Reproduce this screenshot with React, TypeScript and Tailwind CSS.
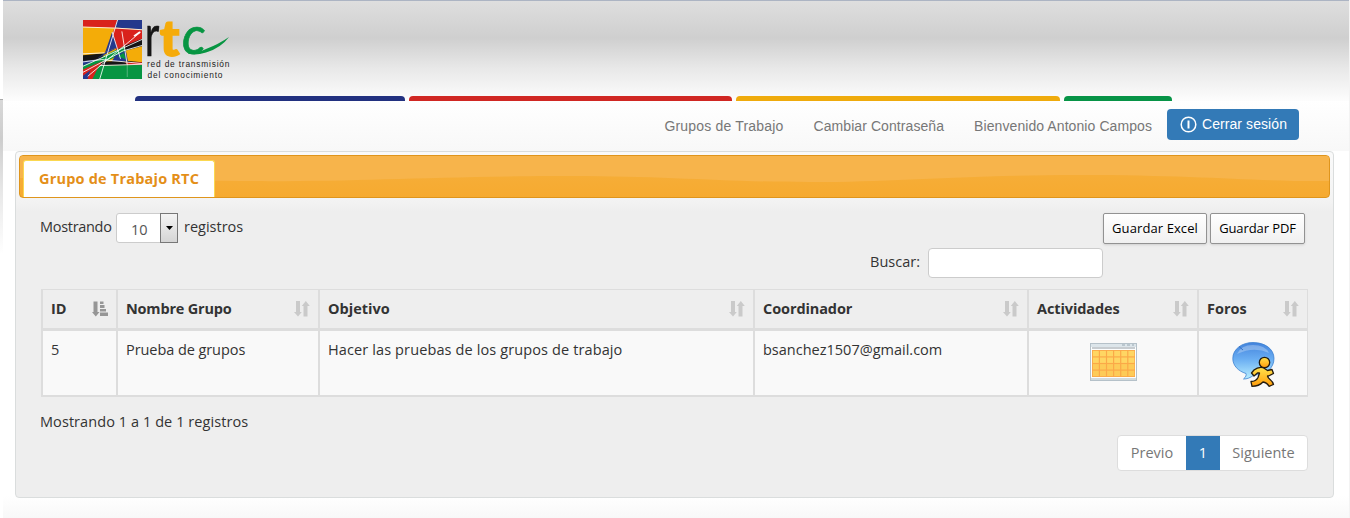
import type { ReactNode } from "react";

function Logo() {
  return (
    <svg width="150" height="64" viewBox="80 18 150 64" className="overflow-visible" role="img" aria-label="rtc">
      <svg x="83" y="20" width="59" height="59" viewBox="0 0 176 176" preserveAspectRatio="none">
        <rect width="176" height="176" fill="#f4ac08" />
        <path d="M0 0H103L95 24L0 20Z" fill="#d9221c" />
        <path d="M103 0H176V28L94 22Z" fill="#24388c" />
        <path d="M94 24L176 30V60L122 84L100 92L84 48Z" fill="#d9221c" />
        <path d="M87 36L102 82L66 96Z" fill="#24388c" />
        <path d="M126 76L176 56V78L118 94Z" fill="#151515" />
        <path d="M0 105L64 99L56 116L0 123Z" fill="#151515" />
        <path d="M56 110L122 78L128 94L60 128Z" fill="#079542" />
        <path d="M70 94L104 82L40 116Z" fill="#24388c" />
        <path d="M0 122L52 116L28 134L0 146Z" fill="#24388c" />
        <path d="M0 136L70 108L62 122L0 154Z" fill="#079542" />
        <path d="M62 124L136 122L176 126V136H40Z" fill="#151515" />
        <path d="M96 106L128 92L134 122L86 124Z" fill="#24388c" />
        <path d="M104 108L122 98L128 118Z" fill="#079542" />
        <path d="M124 126H176V134L136 136Z" fill="#d9221c" />
        <path d="M0 148L56 124L40 176H0Z" fill="#d9221c" />
        <path d="M0 166L22 150L14 176H0Z" fill="#24388c" />
        <path d="M48 136L176 134V176H28Z" fill="#079542" />
        <g stroke="#fff" strokeWidth="2.500" fill="none">
          <path d="M0 21L94 24L176 29M103 0L50 176M0 138L176 58M0 156L120 92L176 76M14 168L172 36M0 101L64 98M0 125L56 118L176 130M87 36L112 116M116 34L132 134M50 136L176 132" />
          <path d="M152 48L170 36" strokeWidth="5" />
          <path d="M132 134V170" strokeWidth="1.500" opacity=".6" />
        </g>
      </svg>
      <text transform="translate(144.8 55.500) scale(.68 1)" fontFamily="Lato, sans-serif" fontSize="59" fill="#171717" stroke="#171717" strokeWidth=".5">r</text>
      <text transform="translate(160 55.500) scale(1.02 1)" fontFamily="Lato, sans-serif" fontWeight="900" fontSize="50" fill="#f5ab0a" stroke="#f5ab0a" strokeWidth="1.800">t</text>
      <text transform="translate(182 54) scale(.98 1)" fontFamily="Lato, sans-serif" fontStyle="italic" fontSize="53" fill="#079542" stroke="#079542" strokeWidth=".7">c</text>
      <path d="M189 52Q196 54 206 49Q219 44 229 37Q221 48 206 52.500Q195 56 188 53.500Z" fill="#079542" />
      <text x="147" y="67.300" fontFamily="'Liberation Sans', sans-serif" fontSize="8.400" textLength="82.500" fill="#222">red de transmisión</text>
      <text x="147.500" y="77.600" fontFamily="'Liberation Sans', sans-serif" fontSize="8.400" textLength="75" fill="#222">del conocimiento</text>
    </svg>
  );
}

function SortIcon({ active }: { active?: boolean }) {
  return active ? (
    <svg width="16" height="16" viewBox="0 0 16 16" fill="#969696" className="shrink-0">
      <path d="M1.500 0.500H5.500V11H7.500L3.800 15.500L0 11H1.500Z" />
      <path d="M8 0.500h3.500v2.500H8zM8 4h4.500v3H8zM8 8h6v2.500H8zM8 11.500h8v3.500H8z" />
    </svg>
  ) : (
    <svg width="16" height="16" viewBox="0 0 16 16" fill="#cacaca" className="shrink-0">
      <path d="M2 0H6V11H7.800L4 15.500L0 11H2Z" />
      <path d="M9.500 15.500h4V5h2.300L11.800 0L7.800 5h1.700Z" />
    </svg>
  );
}

function CalendarIcon() {
  return (
    <svg width="47" height="38" viewBox="0 0 47 38">
      <rect x=".5" y=".5" width="46" height="37" fill="#fcfdfd" stroke="#b5c1c9" />
      <rect x="1" y="1" width="45" height="3" fill="#dce5ea" />
      <path d="M32 2h3M37 2h3M42 2h2" stroke="#98a8b2" />
      <rect x="2" y="4" width="43" height="2" fill="#c7ccd0" />
      <rect x="2" y="7" width="43" height="27" fill="#fba948" />
      {[0, 1, 2, 3].map((r) =>
        [0, 1, 2, 3, 4, 5].map((c) => (
          <rect key={`${r}-${c}`} x={2.900 + c * 7.1} y={7.900 + r * 6.6} width="5.900" height="5.400" fill={r < 2 ? "#ffd663" : "#fdcb58"} />
        )),
      )}
      <rect x="1" y="35" width="45" height="2" fill="#d2dadd" />
    </svg>
  );
}

function ForumIcon() {
  return (
    <svg width="44" height="46" viewBox="0 0 44 46">
      <defs>
        <linearGradient id="bubble" x1="0" y1="0" x2="0" y2="1">
          <stop offset="0" stopColor="#4383dc" />
          <stop offset=".45" stopColor="#69adf2" />
          <stop offset="1" stopColor="#b9efff" />
        </linearGradient>
        <linearGradient id="runner" x1="0" y1="0" x2="0" y2="1">
          <stop offset="0" stopColor="#ffe34d" />
          <stop offset="1" stopColor="#ff9c0b" />
        </linearGradient>
      </defs>
      <path d="M21 1.500C33 1.500 42 8 42 17.500S34 34 22 34C18 37 15 38 11.500 38C14 36 14.500 34 14 32.500C6 30 .8 24.500 .8 17.500C.8 8 10 1.500 21 1.500Z" fill="url(#bubble)" stroke="#3c80d0" strokeWidth=".8" />
      <path d="M5 13Q9 4 21 4T37 12Q22 5 5 13Z" fill="#fff" opacity=".28" />
      <path d="M7 5.500L11 9" stroke="#356fc4" />
      <g fill="url(#runner)" stroke="#231b10" strokeWidth="1.300" strokeLinejoin="round">
        <path d="M22 29Q26 25.500 31 26.500L35.500 29.500L40 28.500L41.500 32.500L36.500 35L35.500 35Q36 37 38 38.500Q41 41 41.500 43.500L37 45.300Q35 41.500 31 41Q27 45.300 20 45.300L19 40.500Q24 40.500 26 36.500L27.500 32L25.500 32L22 35L19.500 32Z" />
        <circle cx="32.500" cy="21.500" r="5.200" />
      </g>
    </svg>
  );
}

function Cell({ children, head }: { children: ReactNode; head?: boolean }) {
  return (
    <div
      className={
        head
          ? "flex items-center justify-between border-l-2 border-[#ddd] pl-2 pr-2 font-bold"
          : "border-l-2 border-[#ddd] bg-[#f9f9f9] pl-2 pt-2"
      }
    >
      {children}
    </div>
  );
}

const grid = "grid grid-cols-[75px_202px_435px_274px_170px_110px] border-r border-[#ddd]";

export default function App() {
  return (
    <div className="flex h-[518px] w-[1350px] overflow-hidden bg-white font-['Open_Sans',sans-serif] text-[14.5px] leading-[22px] text-[#333]">
      <div className="w-[3px] pt-[99px]">
        <div className="h-[155px] border-t border-[#aaa] bg-[linear-gradient(#d8d8d8,#cdcdcd_25%,#e8e8e8_60%,#fff)]" />
      </div>
      <div className="flex w-[1347px] flex-col border-r border-[#f3f3f3]">
        <header className="flex h-[101px] flex-col justify-between border-t border-[#acb4c3] bg-[linear-gradient(#dedede,#cfcfcf_37%,#e8e8e8_67%,#fdfdfd)]">
          <div className="pl-[77px] pt-[17px]"><Logo /></div>
          <div className="flex gap-1 pl-[132px]">
            <i className="h-[5px] w-[270px] rounded-t-[4px] bg-[#223180]" />
            <i className="h-[5px] w-[323px] rounded-t-[4px] bg-[#d02723]" />
            <i className="h-[5px] w-[324px] rounded-t-[4px] bg-[#efab0d]" />
            <i className="h-[5px] w-[108px] rounded-t-[4px] bg-[#079447]" />
          </div>
        </header>
        <nav className="flex h-[50px] items-start justify-end bg-gradient-to-b from-white to-[#f8f8f8] pr-[50px] pt-2 font-['Liberation_Sans',sans-serif] text-[14px] leading-[34px] tracking-[0.08px] text-[#777]">
          <span className="mr-[30px] tracking-[0.18px]">Grupos de Trabajo</span>
          <span className="mr-[30px]">Cambiar Contraseña</span>
          <span className="mr-[15px]">Bienvenido Antonio Campos</span>
          <button className="flex h-[31px] w-[132px] items-center justify-center gap-[5px] rounded-[4px] bg-[#337ab7] pb-px pl-px text-white">
            <svg width="17" height="17" viewBox="0 0 17 17" fill="none" stroke="white">
              <circle cx="8.500" cy="8.500" r="7.300" strokeWidth="1.500" />
              <path d="M8.500 4.500V12.500" strokeWidth="2" />
            </svg>
            <span>Cerrar sesión</span>
          </button>
        </nav>
        <div className="flex flex-1 flex-col bg-[linear-gradient(#fff,#fff_94%,#f8f8f8)] pl-3">
          <main className="h-[347px] w-[1319px] rounded-[4px] border border-[#dadddd] bg-[linear-gradient(#fafafa,#f4f4f4_46px,#eee_60px)] p-[3px]">
            <div className="relative flex h-[43px] w-[1311px] overflow-hidden rounded-[4px] border border-[#df951c] bg-[linear-gradient(#f6b03d,#f6aa30)] pl-[3px] pt-1">
              <svg className="absolute left-0 top-0" width="1311" height="43" viewBox="0 0 1311 43" preserveAspectRatio="none">
                <path d="M0 0H1311V25C1240 26 1180 19 1060 19C940 19 880 26 790 26C700 26 640 19 530 20C400 21 330 26 220 25L0 22Z" fill="#f7b44b" />
              </svg>
              <div className="relative h-[39px] w-[192px] whitespace-nowrap rounded-t-[3px] border border-b-0 border-[#fbd850] bg-white pl-[15px] pt-[7px] text-[14.5px] font-bold tracking-[0.2px] text-[#e48f18]">Grupo de Trabajo RTC</div>
            </div>
            <div className="flex h-[51px] justify-between pl-[21px] pr-[25px] pt-[15px]">
              <div className="flex items-start">
                <span className="mt-[3px] w-[76px] tracking-[-0.3px]">Mostrando</span>
                <div className="flex h-[30px] w-[62px] justify-between rounded-[3px] border border-[#ccc] bg-white text-[#555]">
                  <span className="pl-[14px] pt-[5px]">10</span>
                  <span className="-my-px -mr-px flex w-[18px] items-center justify-center border border-[#777] bg-gradient-to-b from-[#f4f4f4] to-[#d5d5d5]">
                    <svg width="7" height="4" viewBox="0 0 7 4"><path d="M0 0H7L3.500 4Z" fill="#000" /></svg>
                  </span>
                </div>
                <span className="ml-[6px] mt-[3px]">registros</span>
              </div>
              <div className="flex gap-[3px] text-[13px] text-black">
                <button className="h-[31px] w-[104px] whitespace-nowrap rounded-[2px] border border-[#929292] bg-gradient-to-b from-white to-[#f0f0f0] pb-[2px] tracking-[0.1px] shadow-sm">Guardar Excel</button>
                <button className="h-[31px] w-[95px] whitespace-nowrap rounded-[2px] border border-[#929292] bg-gradient-to-b from-white to-[#f0f0f0] pb-[2px] tracking-[-0.1px] shadow-sm">Guardar PDF</button>
              </div>
            </div>
            <div className="flex h-[40px] justify-end pr-[227px]">
              <span className="mr-2 mt-[2px]">Buscar:</span>
              <input aria-label="Buscar" className="-mt-px h-[30px] w-[175px] rounded-[4px] border border-[#ccc] bg-white" />
            </div>
            <div className="ml-[22px] w-[1267px]">
              <div className={`${grid} h-[39px] border-t`}>
                <Cell head>ID<SortIcon active /></Cell>
                <Cell head><span className="tracking-[-0.2px]">Nombre Grupo</span><SortIcon /></Cell>
                <Cell head>Objetivo<SortIcon /></Cell>
                <Cell head><span className="tracking-[-0.1px]">Coordinador</span><SortIcon /></Cell>
                <Cell head><span className="tracking-[-0.1px]">Actividades</span><SortIcon /></Cell>
                <Cell head>Foros<SortIcon /></Cell>
              </div>
              <div className={`${grid} h-[69px] border-b-2 border-t-[3px]`}>
                <Cell>5</Cell>
                <Cell><span className="tracking-[-0.07px]">Prueba de grupos</span></Cell>
                <Cell><span className="tracking-[0.12px]">Hacer las pruebas de los grupos de trabajo</span></Cell>
                <Cell>bsanchez1507@gmail.com</Cell>
                <Cell><div className="flex justify-center pr-2 pt-1"><CalendarIcon /></div></Cell>
                <Cell><div className="flex justify-center pr-[7px] pt-[2px]"><ForumIcon /></div></Cell>
              </div>
            </div>
            <div className="h-[38px] pl-[21px] pt-[14px] tracking-[0.07px]">Mostrando 1 a 1 de 1 registros</div>
            <div className="flex justify-end pr-[22px] text-[#777]">
              <div className="flex h-[36px] w-[191px] overflow-hidden rounded-[4px] border border-[#ddd] bg-white text-center leading-[34px]">
                <span className="w-[68px]">Previo</span>
                <span className="-my-px w-[34px] bg-[#337ab7] leading-[36px] text-white">1</span>
                <span className="w-[87px]">Siguiente</span>
              </div>
            </div>
          </main>
        </div>
      </div>
    </div>
  );
}
